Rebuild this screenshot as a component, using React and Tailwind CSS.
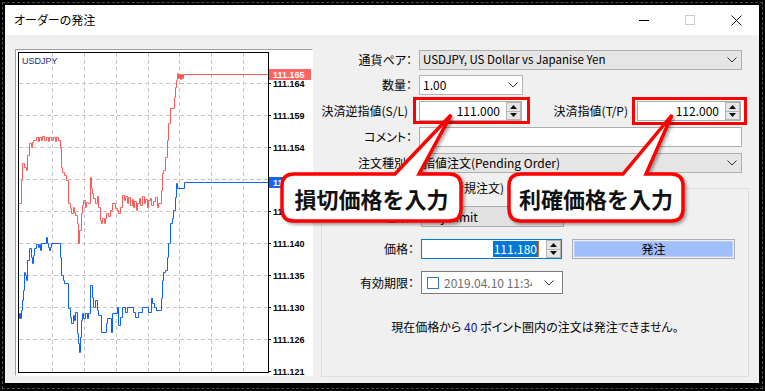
const jp = "font-['Noto_Sans_CJK_JP','Noto_Sans',sans-serif]";
const palt = "[font-feature-settings:'palt']";

const red = [[18,203],[21,180],[22,163],[24,167],[26,170],[27,155],[29,143],[31,147],[32,142],[33,140],[36,137],[38,141],[39,137],[41,140],[42,136],[44,140],[46,137],[48,141],[49,137],[51,140],[53,137],[55,141],[56,137],[58,140],[60,148],[61,167],[62,172],[64,175],[66,180],[68,203],[70,208],[71,213],[73,207],[74,212],[75,215],[77,223],[78,243],[79,230],[81,213],[82,205],[83,200],[85,207],[86,202],[88,203],[90,177],[91,188],[92,193],[93,198],[95,203],[97,196],[98,207],[100,220],[101,223],[102,218],[104,223],[105,218],[106,213],[108,216],[110,210],[112,203],[115,208],[117,210],[118,213],[120,207],[122,195],[124,200],[125,196],[127,203],[128,197],[130,205],[132,199],[133,207],[134,201],[136,210],[137,203],[139,198],[140,205],[142,196],[144,203],[145,199],[147,207],[148,200],[150,198],[151,205],[153,201],[155,197],[157,207],[158,203],[161,190],[162,173],[163,170],[165,157],[167,140],[168,123],[170,108],[174,97],[175,87],[176,80],[177,73],[178,78],[179,74],[180,79],[181,74],[182,78],[183,74],[268,74]];

const blue = [[18,318],[19,313],[20,318],[21,310],[22,300],[23,290],[24,272],[25,275],[26,280],[27,260],[29,248],[31,257],[32,263],[33,255],[34,248],[36,244],[38,247],[39,244],[40,250],[41,243],[46,237],[47,243],[48,247],[49,250],[50,247],[51,243],[60,257],[61,275],[63,280],[64,283],[68,308],[70,317],[71,323],[73,315],[74,320],[75,312],[77,333],[78,343],[79,352],[80,337],[81,320],[82,313],[83,318],[85,313],[87,318],[88,313],[90,285],[92,297],[93,307],[95,300],[97,310],[98,315],[101,332],[106,323],[107,318],[111,332],[112,313],[117,307],[118,325],[120,317],[122,307],[125,312],[127,307],[133,312],[135,317],[138,312],[142,307],[148,312],[151,298],[152,303],[154,307],[156,310],[161,298],[162,280],[163,272],[165,270],[167,257],[168,243],[170,223],[172,218],[173,210],[175,197],[176,183],[177,188],[184,182],[268,182]];

function stepPath(pts) {
  let d = `M${pts[0][0]} ${pts[0][1]}`;
  for (let i = 1; i < pts.length; i++) d += ` H${pts[i][0]} V${pts[i][1]}`;
  return d;
}

const gridX = [52, 84, 116, 148, 179, 211, 243];
const levels = [
  [83, "111.164"], [115, "111.159"], [147, "111.154"], [179, "111.149"], [211, "111.145"],
  [243, "111.140"], [275, "111.135"], [307, "111.130"], [339, "111.126"], [371, "111.121"],
];

const axisFont = "Liberation Sans, sans-serif";

function Chart() {
  return (
    <svg width="296" height="325" viewBox="16 50 296 325" className="block">
      {gridX.map((x) => (
        <line key={x} x1={x + 0.5} y1="53" x2={x + 0.5} y2="372" stroke="#c4c4c4" strokeDasharray="4 3" />
      ))}
      {levels.slice(0, 9).map(([y]) => (
        <line key={y} x1="19" y1={y + 0.5} x2="268" y2={y + 0.5} stroke="#c4c4c4" strokeDasharray="4 3" />
      ))}
      <path d={stepPath(red)} fill="none" stroke="#ff5a5a" strokeWidth="1" transform="translate(0.5 0.5)" />
      <path d={stepPath(blue)} fill="none" stroke="#0f62f5" strokeWidth="1" transform="translate(0.5 0.5)" />
      <rect x="18.5" y="52.5" width="250" height="320" fill="none" stroke="#000" />
      {levels.map(([y, t]) => (
        <g key={t}>
          <line x1="268" y1={y + 0.5} x2="271" y2={y + 0.5} stroke="#000" />
          <text x="273" y={y + 4} fontSize="9" fontWeight="700" fontFamily={axisFont} fill="#000">{t}</text>
        </g>
      ))}
      <rect x="269" y="69" width="42" height="11" fill="#ff6464" />
      <text x="273" y="78" fontSize="9" fontWeight="700" fontFamily={axisFont} fill="#fff">111.165</text>
      <rect x="269" y="177" width="42" height="11" fill="#1664f2" />
      <text x="273" y="186" fontSize="9" fontWeight="700" fontFamily={axisFont} fill="#fff">111.149</text>
      <text x="22" y="64" fontSize="9" fontFamily={axisFont} fill="#1b2a6e">USDJPY</text>
    </svg>
  );
}

function Chevron() {
  return (
    <svg width="10" height="6" viewBox="0 0 10 6" className="shrink-0">
      <polyline points="0.5,0.5 5,5 9.5,0.5" fill="none" stroke="#333" strokeWidth="1" />
    </svg>
  );
}

function Spin() {
  return (
    <div className="flex h-full w-[15px] shrink-0 flex-col border border-[#b4b4b4] bg-[#e6e6e6]">
      <div className="flex flex-1 items-center justify-center border-b border-[#b4b4b4]">
        <svg width="7" height="4"><polygon points="0,4 3.5,0 7,4" fill="#111" /></svg>
      </div>
      <div className="flex flex-1 items-center justify-center">
        <svg width="7" height="4"><polygon points="0,0 7,0 3.5,4" fill="#111" /></svg>
      </div>
    </div>
  );
}

function Label({ children, className = "" }) {
  return <div className={`w-[92px] shrink-0 text-right text-[12px] leading-[16px] ${palt} ${className}`}>{children}</div>;
}

function calloutPath(w, h, b1, b2, tx, ty) {
  const r = 12;
  return `M${r} 0 H${b1} L${tx} ${ty} L${b2} 0 H${w - r} Q${w} 0 ${w} ${r} V${h - r} Q${w} ${h} ${w - r} ${h} H${r} Q0 ${h} 0 ${h - r} V${r} Q0 0 ${r} 0 Z`;
}

function Callout({ className, w, h, b1, b2, tx, ty, text }) {
  return (
    <div className={`absolute z-20 flex items-center justify-center ${className}`}>
      <svg width={w} height={h} className="absolute left-0 top-0 overflow-visible [filter:drop-shadow(2px_2px_1.5px_rgba(0,0,0,0.35))]">
        <path d={calloutPath(w, h, b1, b2, tx, ty)} fill="#fff" stroke="#ff0000" strokeWidth="3.5" />
      </svg>
      <span className="relative text-[22px] font-bold leading-none text-[#111]">{text}</span>
    </div>
  );
}

export default function App() {
  return (
    <div className={`relative h-[391px] w-[765px] overflow-hidden bg-black p-[2px] text-black ${jp}`}>
      <div className="h-full border border-dashed border-[#4d4d4d] pb-[5px] pl-[2px] pr-[3px] pt-[2px]">
        <div className="flex h-full flex-col bg-[#f0f0f0]">
          {/* title bar */}
          <div className="flex h-[30px] shrink-0 items-center bg-white">
            <div className={`flex-1 pl-[9px] text-[12px] ${palt}`}>オーダーの発注</div>
            <div className="flex h-full w-[46px] items-center justify-center">
              <div className="h-px w-[10px] bg-black" />
            </div>
            <div className="flex h-full w-[46px] items-center justify-center">
              <div className="h-[10px] w-[10px] border border-[#cccccc]" />
            </div>
            <div className="flex h-full w-[46px] items-center justify-center">
              <svg width="11" height="11" viewBox="0 0 11 11">
                <path d="M0.5 0.5 L10.5 10.5 M10.5 0.5 L0.5 10.5" stroke="#111" strokeWidth="1" />
              </svg>
            </div>
          </div>

          {/* body */}
          <div className="flex flex-1 pl-[10px] pr-[10px] pt-[14px]">
            <div className="h-[327px] w-[298px] shrink-0 border border-b-white border-l-[#a0a0a0] border-r-white border-t-[#a0a0a0] bg-white">
              <Chart />
            </div>

            <div className="ml-[7px] flex flex-1 flex-col pt-[1px]">
              <div className="flex flex-col pr-[7px]">
                <div className="flex h-[20px] items-center">
                  <Label>通貨ペア：</Label>
                  <div className="ml-[7px] flex h-full flex-1 items-center justify-between border border-[#adadad] bg-[#e5e5e5] pl-[3px] pr-[4px] text-[11.5px]">
                    <span>USDJPY, US Dollar vs Japanise Yen</span>
                    <Chevron />
                  </div>
                </div>

                <div className="mt-[5px] flex h-[20px] items-center">
                  <Label>数量：</Label>
                  <div className="ml-[7px] flex h-full w-[104px] items-center justify-between border border-[#b4b4b4] bg-white pl-[3px] pr-[4px] text-[12px]">
                    <span>1.00</span>
                    <Chevron />
                  </div>
                </div>

                <div className="mt-[6px] flex h-[20px] items-center">
                  <Label className="pr-[4px]">決済逆指値(S/L)</Label>
                  <div className="relative z-10 ml-[7px] flex h-full w-[103px] items-center border border-[#adadad] bg-white">
                    <span className="flex-1 pr-[6px] text-right text-[12px]">111.000</span>
                    <Spin />
                  </div>
                  <div className={`w-[115px] pr-[9px] text-right text-[12px] ${palt}`}>決済指値(T/P)</div>
                  <div className="relative z-10 flex h-full w-[104px] items-center border border-[#adadad] bg-white">
                    <span className="flex-1 pr-[6px] text-right text-[12px]">112.000</span>
                    <Spin />
                  </div>
                </div>

                <div className="mt-[6px] flex h-[20px] items-center">
                  <Label>コメント：</Label>
                  <div className="ml-[7px] h-full flex-1 border border-[#adadad] bg-white" />
                </div>

                <div className="mt-[6px] flex h-[20px] items-center">
                  <Label>注文種別：</Label>
                  <div className="ml-[7px] flex h-full flex-1 items-center justify-between border border-[#adadad] bg-[#e5e5e5] pl-[3px] pr-[4px] text-[12px]">
                    <span>指値注文(Pending Order)</span>
                    <Chevron />
                  </div>
                </div>
              </div>

              <fieldset className="ml-[1px] mt-[7px] h-[197px] border border-[#dcdcdc]">
                <legend className="ml-[76px] px-[2px] text-[12px] leading-[16px]">予約注文(新規注文)</legend>

                <div className="mt-[10px] flex h-[21px] items-center">
                  <Label className="w-[90px]">種類：</Label>
                  <div className="ml-[7px] flex h-full w-[143px] items-center justify-between border border-[#adadad] bg-[#e1e1e1] pl-[3px] pr-[4px] text-[12px]">
                    <span>Buy Limit</span>
                    <Chevron />
                  </div>
                </div>

                <div className="mt-[12px] flex h-[20px] items-center">
                  <Label className="w-[90px]">価格：</Label>
                  <div className="ml-[7px] flex h-full w-[141px] items-center border border-[#0078d7] bg-white">
                    <div className="flex flex-1 items-center justify-end pr-[7px]">
                      <span className="bg-[#0078d7] px-px text-[12px] leading-[16px] text-white">111.180</span>
                      <span className="h-[16px] w-px bg-[#d2691e]" />
                    </div>
                    <Spin />
                  </div>
                  <div className="ml-[10px] h-full w-[163px] border border-[#adadad] p-px">
                    <div className="flex h-full items-center justify-center border border-[#b3cdfb] bg-[#a0befa] text-[12px]">発注</div>
                  </div>
                </div>

                <div className="mt-[12px] flex h-[23px] items-center">
                  <Label className="w-[90px]">有効期限：</Label>
                  <div className="ml-[7px] flex h-full w-[142px] items-center border border-[#7a7a7a] bg-white pl-[5px] pr-[8px]">
                    <div className="h-[12px] w-[12px] shrink-0 border border-[#3377c4] bg-white" />
                    <span className="ml-[5px] w-[88px] overflow-hidden whitespace-nowrap text-[12px] text-[#6d6d6d]">2019.04.10 11:34</span>
                    <div className="flex flex-1 justify-end"><Chevron /></div>
                  </div>
                </div>

                <div className={`mt-[25px] text-center text-[12px] leading-[16px] ${palt}`}>
                  現在価格から <span className="text-[#1a1a80]">40</span> ポイント圏内の注文は発注できません。
                </div>
              </fieldset>
            </div>
          </div>
        </div>
      </div>

      {/* annotations */}
      <div className="absolute left-[413px] top-[97px] h-[27px] w-[117px] border-[3px] border-[#ff0000] bg-white" />
      <div className="absolute left-[632px] top-[97px] h-[28px] w-[115px] border-[3px] border-[#ff0000] bg-white" />
      <Callout className="left-[282px] top-[174px] h-[47px] w-[179px]" w={179} h={47} b1={113} b2={137} tx={169} ty={-59} text="損切価格を入力" />
      <Callout className="left-[509px] top-[174px] h-[47px] w-[174px]" w={174} h={47} b1={114} b2={137} tx={163} ty={-59} text="利確価格を入力" />
    </div>
  );
}
